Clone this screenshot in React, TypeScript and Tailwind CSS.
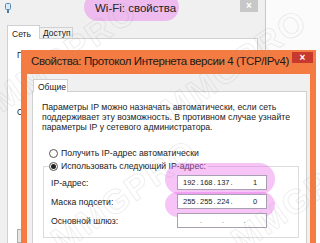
import React from 'react';

const Watermark: React.FC<{ x: number; y: number }> = ({ x, y }) => (
  <div
    className="pointer-events-none absolute text-[34px] font-bold tracking-[2px] text-transparent [-webkit-text-stroke:1px_rgba(150,150,150,0.18)] -rotate-[35deg] [font-family:'Liberation_Sans',sans-serif]"
    style={{ left: x, top: y }}
  >
    MMGPRO
  </div>
);

const IpField: React.FC<{ parts?: string[] }> = ({ parts }) => (
  <div className="flex h-[15px] w-[90px] items-center border border-[#a8a0b0] bg-white text-[7.5px] leading-none text-[#222]">
    {parts ? (
      <>
        <span className="ml-[5px] w-[12px] text-center">{parts[0]}</span>
        <span className="w-[5px] text-center">.</span>
        <span className="w-[12px] text-center">{parts[1]}</span>
        <span className="w-[5px] text-center">.</span>
        <span className="w-[12px] text-center">{parts[2]}</span>
        <span className="w-[5px] text-center">.</span>
        <span className="ml-[19px]">{parts[3]}</span>
      </>
    ) : (
      <>
        <span className="ml-[22px] text-[#c04060]">.</span>
        <span className="ml-[20px] text-[#2a9a9a]">.</span>
        <span className="ml-[19px] text-[#2a9a9a]">.</span>
      </>
    )}
  </div>
);

export default function App() {
  return (
    <div className="relative h-[243px] w-[320px] overflow-hidden bg-[#fbfbfb] [font-family:'Liberation_Sans',sans-serif]">
      {/* back window: Wi-Fi properties */}
      <div className="absolute left-0 top-0 h-[243px] w-[266px] border-r border-[#c8c8c8] bg-[#f0f0f0]">
        <div className="relative flex h-[22px] items-center">
          <div className="absolute left-[84px] top-[-7px] h-[28px] w-[95px] rounded-full bg-[#e86be8]/40" />
          <svg className="absolute left-[5px] top-[3px]" width="6" height="10" viewBox="0 0 6 10">
            <rect x="0.5" y="0.5" width="5" height="6" rx="1" fill="#dbe9f5" stroke="#5a8ab8" />
            <rect x="2" y="7" width="2" height="3" fill="#4a7aa8" />
          </svg>
          <div className="relative -mt-[4px] w-full whitespace-nowrap pl-[95px] text-[11.5px] text-[#222]">
            Wi-Fi: свойства
          </div>
          <div className="absolute left-[240px] top-0 flex h-[12px] w-[18px] items-center justify-center bg-[#c7c7c7] text-[10px] font-bold leading-none text-white">
            ×
          </div>
        </div>
        <div className="ml-[7px] mt-[3px] flex items-end text-[8.5px] text-[#222]">
          <div className="relative z-10 -mb-px h-[14px] w-[33px] border border-b-0 border-[#d0d0d0] bg-white pl-[4px] pt-[2px]">Сеть</div>
          <div className="h-[11px] w-[33px] border border-b-0 border-l-0 border-[#d0d0d0] bg-[#f0f0f0] pl-[3px] pt-[1px] leading-none">Доступ</div>
        </div>
        <div className="ml-[7px] h-[210px] w-[251px] border border-[#d0d0d0] bg-white pl-[9px] pt-[10px] text-[8.5px] text-[#222]">
          <div>Подключение через:</div>
          <div className="mt-[44px]">Отмеченные компоненты:</div>
          <div className="mt-[110px] h-[14px] w-[60px] border border-[#adadad] bg-[#e5e5e5]" />
        </div>
      </div>

      {/* front window: IPv4 properties */}
      <div className="absolute left-[21px] top-[50px] h-[200px] w-[295px] bg-[#f47b42]">
        <div className="relative flex h-[24px] items-center whitespace-nowrap pl-[10px] text-[11.5px] tracking-[-0.4px] text-[#1a1a1a]">
          Свойства: Протокол Интернета версии 4 (TCP/IPv4)
          <div className="absolute right-[3px] top-[2px] flex h-[11px] w-[21px] items-center justify-center bg-[#c7382f] text-[10px] font-bold leading-none tracking-normal text-white">
            ×
          </div>
        </div>
        <div className="mx-[6px] h-[176px] bg-[#f0f0f0] pl-[5px] pr-[3px] pt-[5px]">
          <div className="relative z-10 -mb-px ml-[1px] h-[13px] w-[35px] border border-b-0 border-[#d0d0d0] bg-white pl-[4px] pt-[1px] text-[8.5px] text-[#222]">
            Общие
          </div>
          <div className="h-[160px] whitespace-nowrap border border-[#d0d0d0] bg-white pl-[9px] pr-[8px] pt-[10px] text-[8.7px] leading-[10px] text-[#222]">
            <p>
              Параметры IP можно назначать автоматически, если сеть
              <br />
              поддерживает эту возможность. В противном случае узнайте
              <br />
              параметры IP у сетевого администратора.
            </p>
            <div className="ml-[7px] mt-[16px] flex items-center gap-[3px]">
              <span className="h-[9px] w-[9px] rounded-full border border-[#555] bg-white" />
              <span>Получить IP-адрес автоматически</span>
            </div>
            <div className="relative ml-[1px] mt-[8px] h-[72px] w-[256px] border border-[#dcdcdc]">
              <div className="absolute left-[5px] top-[-6px] flex items-center gap-[3px] bg-white pr-[2px]">
                <span className="flex h-[9px] w-[9px] items-center justify-center rounded-full border border-[#555] bg-white">
                  <span className="h-[5px] w-[5px] rounded-full bg-[#222]" />
                </span>
                <span>Использовать следующий IP-адрес:</span>
              </div>
              <div className="absolute left-[121px] top-[-4px] h-[32px] w-[110px] rounded-[16px] bg-[#e86be8]/40" />
              <div className="absolute left-[121px] top-[25px] h-[25px] w-[110px] rounded-[13px] bg-[#e86be8]/40" />
              <div className="relative flex flex-col gap-[4px] pl-[7px] pt-[8px]">
                <div className="flex items-center">
                  <span className="w-[126px]">IP-адрес:</span>
                  <IpField parts={['192', '168', '137', '1']} />
                </div>
                <div className="flex items-center">
                  <span className="w-[126px]">Маска подсети:</span>
                  <IpField parts={['255', '255', '224', '0']} />
                </div>
                <div className="flex items-center">
                  <span className="w-[126px]">Основной шлюз:</span>
                  <IpField />
                </div>
              </div>
            </div>
          </div>
        </div>
      </div>

      <Watermark x={-20} y={30} />
      <Watermark x={150} y={40} />
      <Watermark x={40} y={170} />
      <Watermark x={220} y={170} />
    </div>
  );
}
